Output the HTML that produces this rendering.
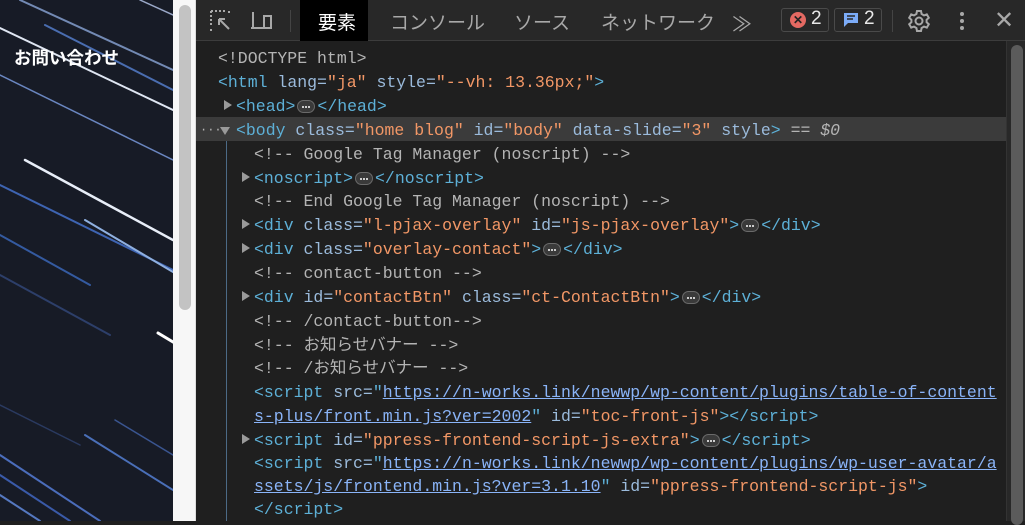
<!DOCTYPE html>
<html><head><meta charset="utf-8"><style>
*{margin:0;padding:0;box-sizing:border-box}
body{width:1025px;height:521px;overflow:hidden;background:#1f1f1f;position:relative;font-family:"Liberation Mono","Noto Sans CJK JP",monospace}
#page{position:absolute;left:0;top:0;width:173px;height:521px;background:#171b26;overflow:hidden}
#track{position:absolute;left:173px;top:0;width:23px;height:521px;background:#f7f7f7;border-right:1px solid #ddd}
#thumb{position:absolute;left:179px;top:5px;width:12px;height:305px;background:#c3c3c3;border-radius:6px}
#tb{position:absolute;left:196px;top:0;width:829px;height:41px;background:#282828;border-bottom:1px solid #3c3c3c;font-family:"Liberation Sans","Noto Sans CJK JP",sans-serif;color:#a8a8a8;font-size:19px}
#tb .t{position:absolute;top:8px}
#dt{position:absolute;left:196px;top:41px;width:810px;height:480px;background:#1f1f1f}
#sb{position:absolute;left:1006px;top:41px;width:19px;height:480px;background:#282828;border-left:1px solid #333}
#sbt{position:absolute;left:1011px;top:45px;width:12px;height:480px;background:#5b5b5b;border-radius:6px}
.l{position:absolute;font-size:16.5px;white-space:pre;color:#9bbbdc;line-height:20px;margin-top:2px}
.g{color:#b4b4b4}.tg{color:#5db0d7}.a{color:#9bbbdc}.v{color:#f29766}.u{color:#8ab4f8;text-decoration:underline}
.tri{position:absolute;width:0;height:0;border-top:5px solid transparent;border-bottom:5px solid transparent;border-left:8px solid #9a9a9a;margin-top:1px}
.el{display:inline-block;width:18px;height:13px;border:1px solid #6a6a6a;border-radius:7px;background:#3a3a3a;vertical-align:middle;margin:0 2px;position:relative}
.el::after{content:"";position:absolute;left:4px;top:5px;width:2px;height:2px;background:#ccc;box-shadow:3px 0 0 #ccc,6px 0 0 #ccc}
</style></head><body>
<div id="page">
<svg width="173" height="521" style="position:absolute;left:0;top:0">
<g stroke-linecap="round">
<line x1="20" y1="0" x2="173" y2="70" stroke="#8aa6d8" stroke-width="2" opacity=".8"/>
<line x1="0" y1="28" x2="173" y2="110" stroke="#dfe6f2" stroke-width="2"/>
<line x1="45" y1="25" x2="173" y2="90" stroke="#4a6db0" stroke-width="2"/>
<line x1="0" y1="75" x2="173" y2="160" stroke="#6a86c0" stroke-width="1.5"/>
<line x1="25" y1="160" x2="173" y2="240" stroke="#e8eef8" stroke-width="2.5"/>
<line x1="0" y1="185" x2="173" y2="270" stroke="#3e64b2" stroke-width="2"/>
<line x1="85" y1="220" x2="173" y2="272" stroke="#8fb0e0" stroke-width="2"/>
<line x1="0" y1="235" x2="90" y2="285" stroke="#345aa0" stroke-width="2"/>
<line x1="0" y1="275" x2="110" y2="335" stroke="#2d3f6a" stroke-width="2"/>
<line x1="158" y1="333" x2="173" y2="342" stroke="#ffffff" stroke-width="3"/>
<line x1="0" y1="405" x2="80" y2="445" stroke="#2a3a60" stroke-width="1.5"/>
<line x1="85" y1="435" x2="173" y2="490" stroke="#4a6fb8" stroke-width="2"/>
<line x1="115" y1="420" x2="173" y2="455" stroke="#3a5590" stroke-width="1.5"/>
<line x1="0" y1="455" x2="100" y2="521" stroke="#4b6dbb" stroke-width="2"/>
<line x1="0" y1="475" x2="70" y2="521" stroke="#3a5aa8" stroke-width="2"/>
<line x1="0" y1="495" x2="40" y2="521" stroke="#5578c0" stroke-width="2"/>
<line x1="140" y1="0" x2="173" y2="15" stroke="#9aa8c8" stroke-width="1.5"/>
</g></svg>
<div style="position:absolute;left:14px;top:45px;color:#fff;font:bold 17.5px 'Liberation Sans','Noto Sans CJK JP',sans-serif">お問い合わせ</div>
</div>
<div id="track"></div><div id="thumb"></div>
<div id="tb">
<svg width="26" height="26" style="position:absolute;left:12px;top:8px" fill="none" stroke="#a8a8a8" stroke-width="2"><path d="M3 3h14M3 3v14M3 21v2M21 3v2" stroke-dasharray="2 2"/><path d="M11 11l10 10M11 11h6M11 11v6"/></svg>
<svg width="26" height="26" style="position:absolute;left:53px;top:8px" fill="none" stroke="#a8a8a8" stroke-width="2"><path d="M4 4v16h10M2 20h12"/><rect x="15" y="8" width="7" height="12"/></svg>
<div style="position:absolute;left:94px;top:10px;width:1px;height:22px;background:#444"></div>
<div style="position:absolute;left:104px;top:0;width:68px;height:41px;background:#000"></div>
<div class="t" style="left:122px;color:#fff">要素</div>
<div class="t" style="left:194px">コンソール</div>
<div class="t" style="left:318px">ソース</div>
<div class="t" style="left:405px">ネットワーク</div>
<div class="t" style="left:536px;font-size:20px">≫</div>
<div style="position:absolute;left:585px;top:8px;width:48px;height:24px;border:1px solid #4a4a4a;border-radius:3px"></div>
<div style="position:absolute;left:594px;top:12px;width:16px;height:16px;border-radius:50%;background:#e46962;color:#222;font-size:12px;line-height:16px;text-align:center;font-weight:bold">✕</div>
<div class="t" style="left:615px;color:#e8e8e8">2</div>
<div style="position:absolute;left:638px;top:8px;width:48px;height:24px;border:1px solid #4a4a4a;border-radius:3px"></div>
<svg width="16" height="16" style="position:absolute;left:647px;top:12px"><path d="M1 1h14v10H5l-4 4z" fill="#7cacf8"/><path d="M4 4h8M4 7h6" stroke="#282828" stroke-width="1.5"/></svg>
<div class="t" style="left:668px;color:#e8e8e8">2</div>
<div style="position:absolute;left:696px;top:10px;width:1px;height:22px;background:#444"></div>
<svg width="24" height="24" style="position:absolute;left:711px;top:9px" fill="none" stroke="#a8a8a8" stroke-width="2"><circle cx="12" cy="12" r="3.5"/><path d="M10 2h4l.6 3 2.4 1.4 2.8-1 2 3.4-2.2 2v2.4l2.2 2-2 3.4-2.8-1L14.6 19l-.6 3h-4l-.6-3L7 17.6l-2.8 1-2-3.4 2.2-2v-2.4l-2.2-2 2-3.4 2.8 1L9.4 5z"/></svg>
<div style="position:absolute;left:764px;top:12px;width:4px;height:4px;border-radius:2px;background:#a8a8a8;box-shadow:0 7px 0 #a8a8a8,0 14px 0 #a8a8a8"></div>
<div class="t" style="left:798px;top:6px;font-size:24px">✕</div>
</div>
<div id="dt">
<div style="position:absolute;left:0;top:76px;width:810px;height:24px;background:#3b3b3b"></div>
<div style="position:absolute;left:30px;top:100px;width:1px;height:380px;background:#4c6a86"></div>
</div>
<div id="sb"></div><div id="sbt"></div>
<div id="code">
<div class="l g" style="left:218px;top:47px">&lt;!DOCTYPE html&gt;</div>
<div class="l" style="left:218px;top:71px"><span class="tg">&lt;html</span> lang=<span class="v">"ja"</span> style=<span class="v">"--vh: 13.36px;"</span><span class="tg">&gt;</span></div>
<div class="tri" style="left:224px;top:99px"></div>
<div class="l" style="left:236px;top:95px"><span class="tg">&lt;head&gt;</span><span class="el"></span><span class="tg">&lt;/head&gt;</span></div>
<div class="l g" style="left:200px;top:118px;font-size:12px">···</div>
<div class="tri" style="left:220px;top:126px;border-left:5px solid transparent;border-right:5px solid transparent;border-top:8px solid #9a9a9a;border-bottom:0"></div>
<div class="l" style="left:236px;top:119px"><span class="tg">&lt;body</span> class=<span class="v">"home blog"</span> id=<span class="v">"body"</span> data-slide=<span class="v">"3"</span> style<span class="tg">&gt;</span> <span class="g">== <i>$0</i></span></div>
<div class="l g" style="left:254px;top:143px">&lt;!-- Google Tag Manager (noscript) --&gt;</div>
<div class="tri" style="left:242px;top:171px"></div>
<div class="l" style="left:254px;top:167px"><span class="tg">&lt;noscript&gt;</span><span class="el"></span><span class="tg">&lt;/noscript&gt;</span></div>
<div class="l g" style="left:254px;top:190px">&lt;!-- End Google Tag Manager (noscript) --&gt;</div>
<div class="tri" style="left:242px;top:218px"></div>
<div class="l" style="left:254px;top:214px"><span class="tg">&lt;div</span> class=<span class="v">"l-pjax-overlay"</span> id=<span class="v">"js-pjax-overlay"</span><span class="tg">&gt;</span><span class="el"></span><span class="tg">&lt;/div&gt;</span></div>
<div class="tri" style="left:242px;top:242px"></div>
<div class="l" style="left:254px;top:238px"><span class="tg">&lt;div</span> class=<span class="v">"overlay-contact"</span><span class="tg">&gt;</span><span class="el"></span><span class="tg">&lt;/div&gt;</span></div>
<div class="l g" style="left:254px;top:262px">&lt;!-- contact-button --&gt;</div>
<div class="tri" style="left:242px;top:290px"></div>
<div class="l" style="left:254px;top:286px"><span class="tg">&lt;div</span> id=<span class="v">"contactBtn"</span> class=<span class="v">"ct-ContactBtn"</span><span class="tg">&gt;</span><span class="el"></span><span class="tg">&lt;/div&gt;</span></div>
<div class="l g" style="left:254px;top:310px">&lt;!-- /contact-button--&gt;</div>
<div class="l g" style="left:254px;top:334px">&lt;!-- お知らせバナー --&gt;</div>
<div class="l g" style="left:254px;top:357px">&lt;!-- /お知らせバナー --&gt;</div>
<div class="l" style="left:254px;top:381px"><span class="tg">&lt;script</span> src=<span class="tg">"</span><span class="u">https://n-works.link/newwp/wp-content/plugins/table-of-content</span></div>
<div class="l" style="left:254px;top:405px"><span class="u">s-plus/front.min.js?ver=2002</span><span class="tg">"</span> id=<span class="v">"toc-front-js"</span><span class="tg">&gt;&lt;/script&gt;</span></div>
<div class="tri" style="left:242px;top:433px"></div>
<div class="l" style="left:254px;top:429px"><span class="tg">&lt;script</span> id=<span class="v">"ppress-frontend-script-js-extra"</span><span class="tg">&gt;</span><span class="el"></span><span class="tg">&lt;/script&gt;</span></div>
<div class="l" style="left:254px;top:452px"><span class="tg">&lt;script</span> src=<span class="tg">"</span><span class="u">https://n-works.link/newwp/wp-content/plugins/wp-user-avatar/a</span></div>
<div class="l" style="left:254px;top:475px"><span class="u">ssets/js/frontend.min.js?ver=3.1.10</span><span class="tg">"</span> id=<span class="v">"ppress-frontend-script-js"</span><span class="tg">&gt;</span></div>
<div class="l" style="left:254px;top:498px"><span class="tg">&lt;/script&gt;</span></div>
</div>
</body></html>
